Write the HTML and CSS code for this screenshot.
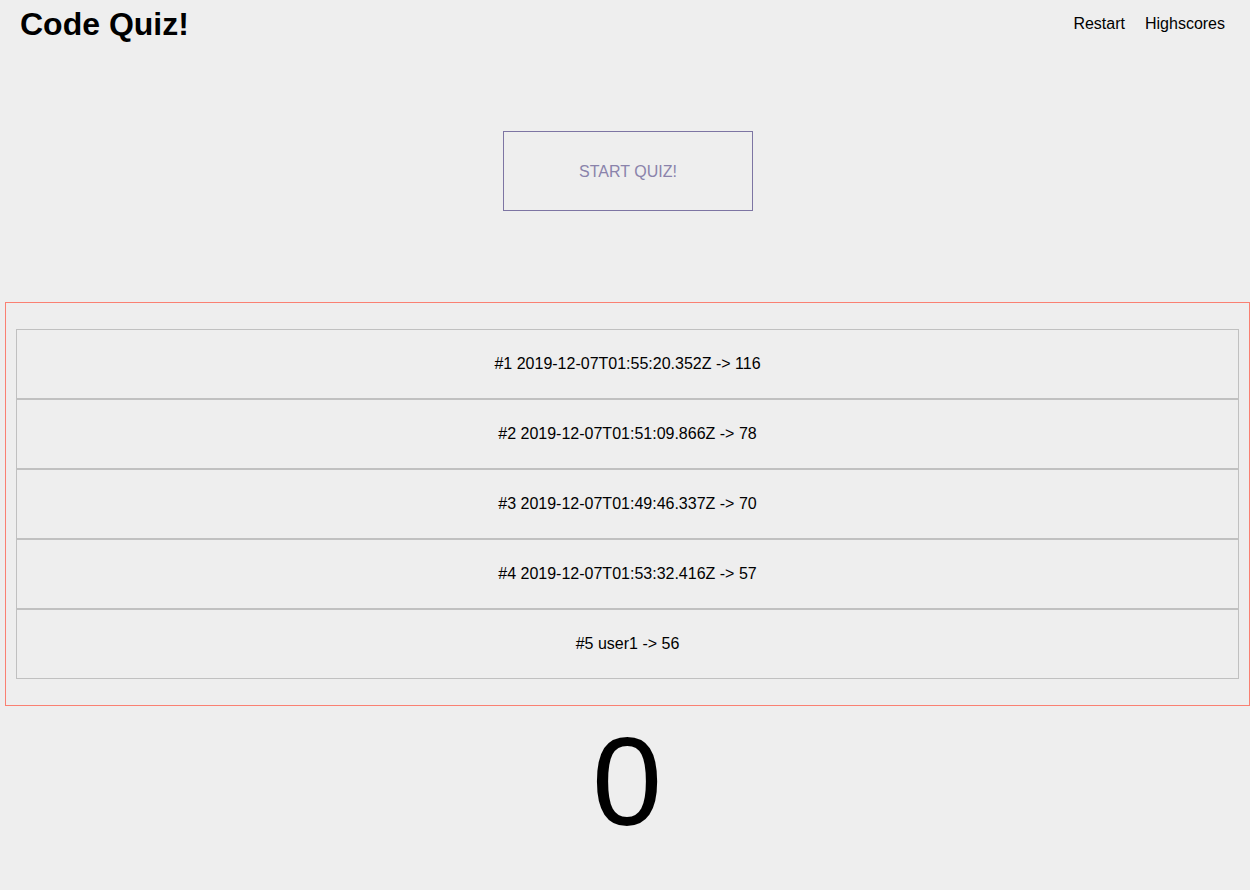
FILE: index.html
```html
<!DOCTYPE html>
<html lang="en">
<head>
<meta charset="utf-8">
<title>Code Quiz!</title>
<link rel="stylesheet" href="styles.css">
</head>
<body>
<header class="top-bar">
  <h1 class="title">Code Quiz!</h1>
  <nav class="nav">
    <a class="nav-link" href="#">Restart</a>
    <a class="nav-link" href="#">Highscores</a>
  </nav>
</header>
<section class="start-area">
  <button class="start-btn" type="button">START QUIZ!</button>
</section>
<section class="scores">
  <ul class="score-list">
    <li class="score-row">#1 2019-12-07T01:55:20.352Z -&gt; 116</li>
    <li class="score-row">#2 2019-12-07T01:51:09.866Z -&gt; 78</li>
    <li class="score-row">#3 2019-12-07T01:49:46.337Z -&gt; 70</li>
    <li class="score-row">#4 2019-12-07T01:53:32.416Z -&gt; 57</li>
    <li class="score-row">#5 user1 -&gt; 56</li>
  </ul>
</section>
<div class="timer">0</div>
</body>
</html>
```
FILE: styles.css
```css
html, body {
  margin: 0;
  padding: 0;
  background: #eeeeee;
  font-family: "Liberation Sans", Arial, sans-serif;
  color: #000;
}

.top-bar {
  display: flex;
  justify-content: space-between;
  align-items: flex-start;
  padding: 6px 25px 0 20px;
}

.title {
  margin: 0;
  font-size: 32px;
  line-height: 37px;
  font-weight: bold;
}

.nav {
  display: flex;
  gap: 20px;
  margin-top: 9px;
  font-size: 16px;
}

.nav-link {
  color: #000;
  text-decoration: none;
}

.start-area {
  display: flex;
  justify-content: center;
  padding: 88px 0 91px;
}

.start-btn {
  box-sizing: border-box;
  width: 250px;
  height: 80px;
  margin-left: 6px;
  background: transparent;
  border: 1px solid #7d75a3;
  color: #8a83ab;
  font-family: "Liberation Sans", Arial, sans-serif;
  font-size: 16px;
  padding: 1px 0 0;
}

.scores {
  box-sizing: border-box;
  width: calc(100% - 5px);
  margin-left: 5px;
  border: 1px solid #fa8072;
  padding: 10px;
}

.score-list {
  list-style: none;
  margin: 16px 0;
  padding: 0;
}

.score-row {
  box-sizing: border-box;
  height: 70px;
  border: 1px solid #c0c0c0;
  display: flex;
  align-items: center;
  justify-content: center;
  font-size: 16px;
}

.timer {
  text-align: center;
  font-size: 126px;
  line-height: normal;
  margin-top: 3px;
  padding-left: 4px;
}
```
